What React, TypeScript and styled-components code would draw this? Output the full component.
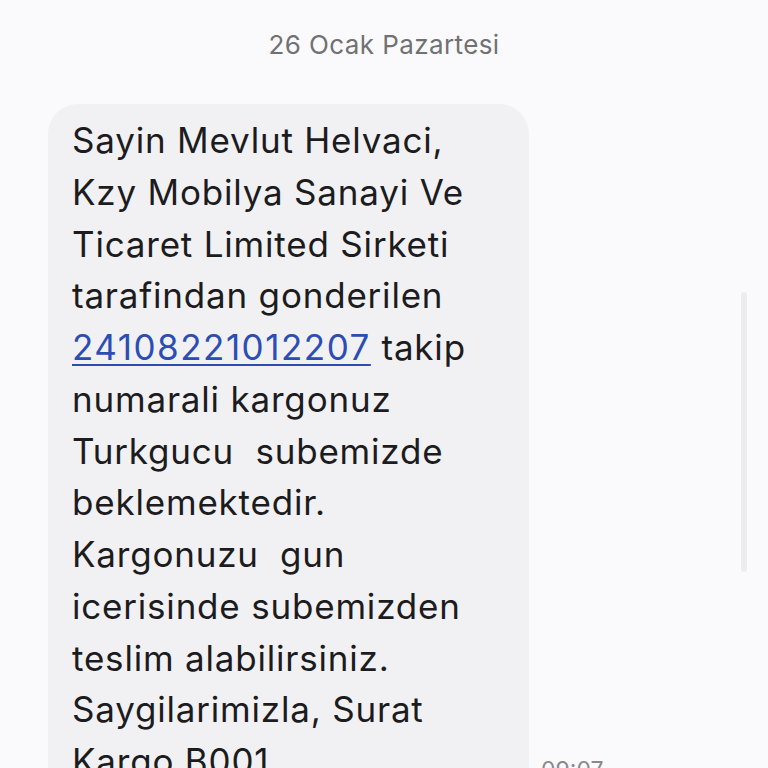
import React from "react";
import styled, { createGlobalStyle } from "styled-components";

const Global = createGlobalStyle`
  html, body { margin: 0; padding: 0; background: #fafafc; }
  body { overflow: hidden; }
`;

const Screen = styled.div`
  position: relative;
  width: 768px;
  height: 768px;
  overflow: hidden;
  background: #fafafc;
  font-family: Inter, "Noto Sans", sans-serif;
  display: flex;
  flex-direction: column;
`;

const DateLabel = styled.div`
  text-align: center;
  color: #717174;
  font-size: 26px;
  line-height: 30px;
  padding-top: 30px;
  letter-spacing: 0.4px;
`;

const Row = styled.div`
  display: flex;
  align-items: flex-end;
  gap: 12px;
  margin-top: 44px;
  padding-left: 48px;
`;

const Bubble = styled.div`
  width: 481px;
  box-sizing: border-box;
  background: #f1f1f3;
  border-radius: 30px;
  padding: 11px 10px 12px 24px;
  color: #1c1c1e;
  font-size: 35px;
  letter-spacing: 0.8px;
  line-height: 51.75px;
  white-space: pre;
`;

const Link = styled.span`
  color: #2c4db3;
  letter-spacing: 1.5px;
  text-decoration: underline;
  text-decoration-thickness: 2px;
  text-underline-offset: 4px;
`;

const Time = styled.div`
  color: #8a8a8e;
  font-size: 23px;
  padding-bottom: 16px;
`;

const ScrollThumb = styled.div`
  position: absolute;
  right: 21px;
  top: 292px;
  width: 6px;
  height: 280px;
  border-radius: 3px;
  background: #ececef;
`;

export default function App() {
  return (
    <Screen>
      <Global />
      <DateLabel>26 Ocak Pazartesi</DateLabel>
      <Row>
        <Bubble>
          {"Sayin Mevlut Helvaci,\nKzy Mobilya Sanayi Ve\nTicaret Limited Sirketi\ntarafindan gonderilen\n"}
          <Link>24108221012207</Link>
          {" takip\nnumarali kargonuz\nTurkgucu  subemizde\nbeklemektedir.\nKargonuzu  gun\nicerisinde subemizden\nteslim alabilirsiniz.\nSaygilarimizla, Surat\nKargo B001"}
        </Bubble>
        <Time>09:07</Time>
      </Row>
      <ScrollThumb />
    </Screen>
  );
}
